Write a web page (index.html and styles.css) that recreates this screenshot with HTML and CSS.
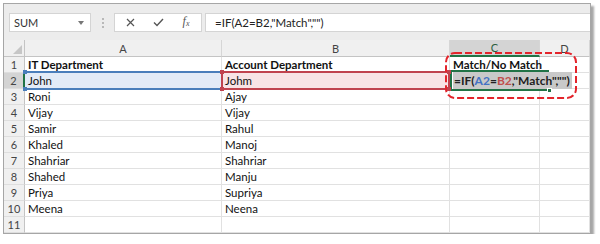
FILE: index.html
```html
<!DOCTYPE html>
<html lang="en">
<head>
  <meta charset="UTF-8" />
  <title>Match Formula</title>
  <link rel="stylesheet" href="styles.css">
</head>
<body>

  <div class="frame">
    <div class="formula-bar">
      <div class="name-box"><span>SUM</span><span class="caret"></span></div>
      <div class="grip"><i></i><i></i><i></i></div>
      <div class="fx-buttons">
        <svg width="9" height="9" viewBox="0 0 9 9"><path d="M1 1L8 8M8 1L1 8" stroke="#555" stroke-width="1.2" fill="none"/></svg>
        <svg width="11" height="9" viewBox="0 0 11 9"><path d="M1 4.5L4 7.5L10 1" stroke="#555" stroke-width="1.4" fill="none"/></svg>
        <span class="fx">f<sub>x</sub></span>
      </div>
      <div class="formula-input">=IF(A2=B2,"Match","")</div>
    </div>

    <div class="sheet">
      <div class="hd corner"><span class="tri"></span></div>
      <div class="hd">A</div>
      <div class="hd">B</div>
      <div class="hd sel">C</div>
      <div class="hd">D</div>

      <div class="rh">1</div>
      <div class="c b">IT Department</div>
      <div class="c b">Account Department</div>
      <div class="c b">Match/No Match</div>
      <div class="c"></div>

      <div class="rh sel">2</div>
      <div class="c a2">John<i class="sq tl"></i><i class="sq bl"></i></div>
      <div class="c b2">Johm<i class="sq tl"></i><i class="sq bl"></i><i class="sq tr"></i><i class="sq br"></i></div>
      <div class="c"></div>
      <div class="c"></div>

      <div class="rh">3</div>
      <div class="c">Roni</div>
      <div class="c">Ajay</div>
      <div class="c"></div>
      <div class="c"></div>

      <div class="rh">4</div>
      <div class="c">Vijay</div>
      <div class="c">Vijay</div>
      <div class="c"></div>
      <div class="c"></div>

      <div class="rh">5</div>
      <div class="c">Samir</div>
      <div class="c">Rahul</div>
      <div class="c"></div>
      <div class="c"></div>

      <div class="rh">6</div>
      <div class="c">Khaled</div>
      <div class="c">Manoj</div>
      <div class="c"></div>
      <div class="c"></div>

      <div class="rh">7</div>
      <div class="c">Shahriar</div>
      <div class="c">Shahriar</div>
      <div class="c"></div>
      <div class="c"></div>

      <div class="rh">8</div>
      <div class="c">Shahed</div>
      <div class="c">Manju</div>
      <div class="c"></div>
      <div class="c"></div>

      <div class="rh">9</div>
      <div class="c">Priya</div>
      <div class="c">Supriya</div>
      <div class="c"></div>
      <div class="c"></div>

      <div class="rh">10</div>
      <div class="c">Meena</div>
      <div class="c">Neena</div>
      <div class="c"></div>
      <div class="c"></div>

      <div class="rh">11</div>
      <div class="c"></div>
      <div class="c"></div>
      <div class="c"></div>
      <div class="c"></div>

      <!-- cell editor for C2 -->
      <div class="editor">
        <span class="edit-text">=IF(<span class="ref-a">A2</span>=<span class="ref-b">B2</span>,"Match","")</span>
        <i class="handle"></i>
      </div>

      <!-- red dashed callout -->
      <svg class="callout" width="132" height="47" viewBox="0 0 132 47">
        <rect x="1" y="1" width="130" height="45" rx="9" fill="none" stroke="#e3242b" stroke-width="2" stroke-dasharray="7 3"/>
      </svg>
    </div>
  </div>

</body>
</html>
```

FILE: styles.css
```css
* {
  box-sizing: border-box;
}

body {
  margin: 0;
  background: #fff;
  font-family: Lato, 'Liberation Sans', sans-serif;
  color: #111;
}

.frame {
  margin: 3px 0 0 3px;
  width: 588px;
  border: 1px solid #a6a6a6;
  box-shadow: 3px 3px 2px rgba(0, 0, 0, 0.35);
  background: #fff;
}

/* formula bar */
.formula-bar {
  display: flex;
  align-items: flex-start;
  height: 36px;
  padding: 9px 0 0 5px;
  background: #ececec;
}

.name-box {
  width: 82px;
  height: 19px;
  background: #fff;
  border: 1px solid #d4d4d4;
  display: flex;
  align-items: center;
  justify-content: space-between;
  padding: 0 6px 0 4px;
  font-size: 11px;
  color: #333;
}

.caret {
  width: 0;
  height: 0;
  border-left: 3.5px solid transparent;
  border-right: 3.5px solid transparent;
  border-top: 4px solid #777;
}

.grip {
  display: flex;
  flex-direction: column;
  gap: 2px;
  margin: 5px 10px 0 11px;
}

.grip i {
  display: block;
  width: 2px;
  height: 2px;
  background: #b8b8b8;
}

.fx-buttons {
  width: 88px;
  height: 19px;
  background: #fff;
  border: 1px solid #d4d4d4;
  display: grid;
  grid-template-columns: repeat(3, 28px);
  justify-items: center;
  align-items: center;
  padding-left: 1px;
}

.fx {
  font-family: 'Liberation Serif', serif;
  font-style: italic;
  font-size: 12px;
  color: #555;
  line-height: 12px;
}

.fx sub {
  font-size: 8px;
  vertical-align: -1px;
}

.formula-input {
  flex: 1;
  margin-left: 3px;
  height: 19px;
  background: #fff;
  border: 1px solid #d4d4d4;
  border-right: none;
  padding-left: 9px;
  font-size: 11.5px;
  line-height: 17px;
  color: #222;
}

/* grid */
.sheet {
  position: relative;
  display: grid;
  grid-template-columns: 21px 197px 228px 90px 50px;
  grid-template-rows: 17px repeat(11, 16px);
}

.hd {
  background: #f0f0f0;
  border-right: 1px solid #d6d6d6;
  border-bottom: 1px solid #c4c4c4;
  display: flex;
  align-items: center;
  justify-content: center;
  font-size: 11px;
  color: #444;
}

.hd.sel {
  background: #d4d4d4;
  border-bottom: 2px solid #217346;
  color: #2b5f3d;
}

.corner {
  align-items: flex-end;
  justify-content: flex-end;
  padding: 0 2px 2px 0;
  border-right-color: #c4c4c4;
}

.tri {
  width: 0;
  height: 0;
  border-left: 9px solid transparent;
  border-bottom: 9px solid #c6c6c6;
}

.rh {
  background: #f0f0f0;
  border-right: 1px solid #c4c4c4;
  border-bottom: 1px solid #dedede;
  font-size: 11px;
  line-height: 15px;
  text-align: center;
  color: #444;
}

.rh.sel {
  background: #d4d4d4;
  border-right: 2px solid #217346;
}

.c {
  position: relative;
  border-right: 1px solid #e1e1e1;
  border-bottom: 1px solid #e1e1e1;
  padding-left: 3px;
  font-size: 11.5px;
  line-height: 15px;
  white-space: nowrap;
  color: #111;
}

.c.b {
  font-weight: bold;
}

.a2 {
  background: #e3ebf7;
}

.a2::after,
.b2::after {
  content: "";
  position: absolute;
  left: -1px;
  right: -1px;
  top: -2px;
  bottom: -2px;
  border-top: 2px solid #4a7ebb;
  border-bottom: 2px solid #4a7ebb;
}

.b2 {
  background: #f8e3e5;
}

.b2::after {
  border-color: #c0424e;
  border-left: 2px solid #c0424e;
  border-right: 2px solid #c0424e;
}

.sq {
  position: absolute;
  width: 4px;
  height: 4px;
  background: #4a7ebb;
  z-index: 1;
}

.b2 .sq {
  background: #c0424e;
}

.sq.tl { left: -2px; top: -3px; }
.sq.bl { left: -2px; bottom: -3px; }
.sq.tr { right: -2px; top: -3px; }
.sq.br { right: -2px; bottom: -3px; }

/* in-cell editor */
.editor {
  position: absolute;
  left: 446px;
  top: 30px;
  width: 99px;
  height: 21px;
  border-top: 2px solid #217346;
  border-bottom: 2px solid #217346;
  border-left: 2px solid #217346;
  background: #fff;
}

.edit-text {
  position: absolute;
  left: 1px;
  top: 0;
  height: 17px;
  padding: 0 2px 0 1px;
  background: #c9c9c9;
  font-size: 12px;
  font-weight: bold;
  line-height: 17px;
  white-space: nowrap;
  color: #222;
}

.ref-a {
  color: #4472c4;
}

.ref-b {
  color: #c0504d;
}

.handle {
  position: absolute;
  right: -3px;
  bottom: -4px;
  width: 5px;
  height: 5px;
  background: #217346;
  border: 1px solid #fff;
}

.callout {
  position: absolute;
  left: 441px;
  top: 12px;
}
```
